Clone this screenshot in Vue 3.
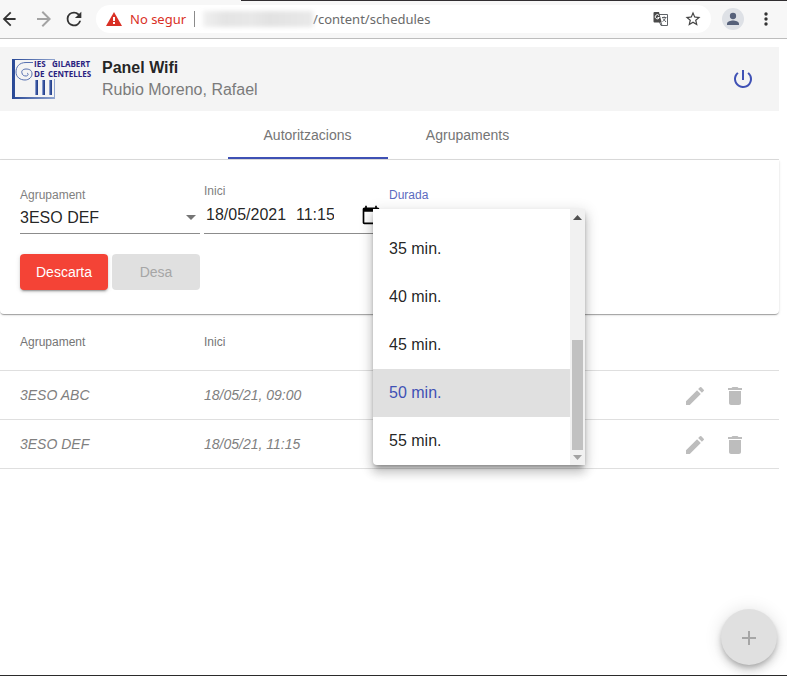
<script setup>
import { ref } from 'vue'

const group = ref('3ESO DEF')
const startDate = ref('18/05/2021')
const startTime = ref('11:15')
const duration = ref('50 min.')
const activeTab = ref('Autoritzacions')

const tabs = ['Autoritzacions', 'Agrupaments']
const groups = ['3ESO ABC', '3ESO DEF']
const durations = ['35 min.', '40 min.', '45 min.', '50 min.', '55 min.']
const schedules = [
  { group: '3ESO ABC', start: '18/05/21, 09:00' },
  { group: '3ESO DEF', start: '18/05/21, 11:15' },
]
</script>

<template>
  <div class="window">
    <div class="browser">
      <div class="window-edge"></div>
      <button class="nav" aria-label="Enrere">
        <svg width="24" height="24" viewBox="0 0 24 24"><path fill="#333" d="M19 11H6.830l5.590-5.590L11 4l-8 8 8 8 1.410-1.410L6.830 13H17v-2z" /></svg>
      </button>
      <button class="nav" aria-label="Endavant">
        <svg width="24" height="24" viewBox="0 0 24 24"><path fill="#a3a3a3" d="M5 11h12.170l-5.590-5.590L13 4l8 8-8 8-1.410-1.410L17.170 13H7v-2z" /></svg>
      </button>
      <button class="nav" aria-label="Actualitza">
        <svg width="22" height="22" viewBox="0 0 24 24"><path fill="#333" d="M17.650 6.350A7.960 7.960 0 0 0 12 4a8 8 0 1 0 7.730 10h-2.080A6 6 0 1 1 12 6c1.660 0 3.140.690 4.220 1.780L13 11h7V4l-2.350 2.350z" /></svg>
      </button>
      <div class="address">
        <svg class="warning" width="16" height="14" viewBox="0 0 16 14"><path fill="#d93025" d="M8 0 16 14H0z" /><path fill="#fff" d="M7 5h2v4H7zM7 10h2v2H7z" /></svg>
        <span class="unsafe">No segur</span>
        <span class="divider"></span>
        <span class="host"></span>
        <span class="path">/content/schedules</span>
        <button class="tool translate" aria-label="Tradueix">
          <svg width="16" height="16" viewBox="0 0 16 16">
            <path fill="none" stroke="#5f6368" d="M6 3.500h8.500v11H8L6.500 11" />
            <path fill="#4a4a4a" d="M1.500 1H6l2.700 10.500H1.500A1 1 0 0 1 .500 10.500V2a1 1 0 0 1 1-1z" />
            <path fill="none" stroke="#fff" d="M6 4.500A2.100 2.100 0 1 0 6.300 6.500H4.500" />
            <path fill="none" stroke="#5f6368" d="M9 6.500h4.500M11.200 5.500v1M12.500 6.500c-.5 2-1.500 3-3 4M10 7.500l3 3.500M8 11.500l1 3" />
          </svg>
        </button>
        <button class="tool" aria-label="Afegeix a les adreces d'interès">
          <svg width="18" height="18" viewBox="0 0 24 24"><path fill="#444" d="m22 9.240-7.190-.620L12 2 9.190 8.630 2 9.240l5.460 4.730L5.820 21 12 17.270 18.180 21l-1.630-7.030L22 9.240zM12 15.400l-3.760 2.270 1-4.280-3.320-2.880 4.380-.380L12 6.100l1.710 4.040 4.380.380-3.320 2.880 1 4.280L12 15.400z" /></svg>
        </button>
      </div>
      <button class="profile" aria-label="Perfil">
        <svg width="18" height="18" viewBox="0 0 24 24"><circle cx="12" cy="8" r="4.200" fill="#56617a" /><path fill="#56617a" d="M12 14c-3 0-8 1.500-8 4.400V20h16v-1.600C20 15.500 15 14 12 14z" /></svg>
      </button>
      <button class="more" aria-label="Menú">
        <svg width="4" height="14" viewBox="0 0 4 14"><g fill="#333"><circle cx="2" cy="2" r="1.700" /><circle cx="2" cy="7" r="1.700" /><circle cx="2" cy="12" r="1.700" /></g></svg>
      </button>
    </div>

    <main class="page">
      <header class="header">
        <svg class="logo" width="82" height="42" viewBox="0 0 82 42" role="img" aria-label="IES Gilabert de Centelles">
          <defs>
            <linearGradient id="frame" x1="0" x2="1"><stop offset="0" stop-color="#274795" /><stop offset="1" stop-color="#91a5cf" /></linearGradient>
            <linearGradient id="column" x1="0" x2="1"><stop offset="0" stop-color="#a9b8df" /><stop offset=".5" stop-color="#3a569f" /><stop offset="1" stop-color="#203b85" /></linearGradient>
          </defs>
          <path fill="url(#frame)" d="M0 1h43v1H3v37h40v2H0z" />
          <path fill="#91a5cf" d="M42 1h1v2h-1zM42 21h1v20h-1z" />
          <path fill="none" stroke="#5670b0" d="M21 4.500h-7C7 4.500 4 9 4 14c0 5 4 8 9 8 4 0 7-3 7-6 0-4-3-5-6-5-3 0-5 2-4 4 0 2 2 3 4 3 2 0 3-2 1-3" />
          <g fill="url(#column)"><rect x="23" y="22" width="3" height="15" /><rect x="30" y="22" width="3" height="15" /><rect x="37" y="22" width="3" height="15" /></g>
          <g class="logo-text"><text x="22" y="9">IES</text><text x="40" y="9">GILABERT</text><text x="22" y="19">DE</text><text x="36" y="19">CENTELLES</text></g>
        </svg>
        <div class="titles">
          <h1>Panel Wifi</h1>
          <p>Rubio Moreno, Rafael</p>
        </div>
        <button class="power" aria-label="Tanca la sessió">
          <svg width="24" height="24" viewBox="0 0 24 24"><path fill="#3f51b5" d="M13 3h-2v10h2V3zm4.830 2.170-1.420 1.420A6.920 6.920 0 0 1 19 12a7 7 0 1 1-11.420-5.420L6.170 5.170A8.930 8.930 0 0 0 3 12a9 9 0 1 0 14.830-6.830z" /></svg>
        </button>
      </header>

      <nav class="tabs" role="tablist">
        <button v-for="tab in tabs" :key="tab" class="tab" :class="{ active: tab === activeTab }" role="tab" :aria-selected="tab === activeTab" @click="activeTab = tab">{{ tab }}</button>
      </nav>

      <form class="card" @submit.prevent>
        <div class="fields">
          <div class="field">
            <label for="group">Agrupament</label>
            <select id="group" v-model="group">
              <option v-for="g in groups" :key="g">{{ g }}</option>
            </select>
          </div>
          <div class="field moment">
            <label for="date">Inici</label>
            <div class="inputs">
              <input id="date" v-model="startDate" class="date" type="text">
              <input v-model="startTime" class="time" type="text" aria-label="Hora d'inici">
              <button class="calendar" type="button" aria-label="Obre el calendari">
                <svg width="20" height="20" viewBox="0 0 24 24"><path d="M20 3h-1V1h-2v2H7V1H5v2H4c-1.100 0-2 .9-2 2v16c0 1.100.9 2 2 2h16c1.100 0 2-.9 2-2V5c0-1.100-.9-2-2-2zm0 18H4V8h16v13z" /></svg>
              </button>
            </div>
          </div>
          <div class="field duration">
            <label for="duration">Durada</label>
            <select id="duration" v-model="duration">
              <option v-for="d in durations" :key="d">{{ d }}</option>
            </select>
            <div class="panel">
              <div class="options" role="listbox" aria-label="Durada">
                <button v-for="d in durations" :key="d" type="button" class="option" :class="{ selected: d === duration }" role="option" :aria-selected="d === duration" @click="duration = d">{{ d }}</button>
              </div>
              <div class="scrollbar">
                <svg width="9" height="5" viewBox="0 0 9 5"><path fill="#505050" d="M4.500 0 9 5H0z" /></svg>
                <div class="thumb"></div>
                <svg width="9" height="5" viewBox="0 0 9 5"><path fill="#a3a3a3" d="M0 0h9L4.500 5z" /></svg>
              </div>
            </div>
          </div>
        </div>
        <div class="actions">
          <button class="discard" type="button">Descarta</button>
          <button class="save" type="submit" disabled>Desa</button>
        </div>
      </form>

      <table>
        <thead>
          <tr><th class="first">Agrupament</th><th class="second">Inici</th><th></th></tr>
        </thead>
        <tbody>
          <tr v-for="s in schedules" :key="s.start">
            <td>{{ s.group }}</td>
            <td>{{ s.start }}</td>
            <td>
              <div class="row-tools">
                <button disabled aria-label="Edita"><svg width="24" height="24" viewBox="0 0 24 24"><path d="M3 17.250V21h3.750L17.810 9.940l-3.750-3.750L3 17.250zM20.710 7.040a1 1 0 0 0 0-1.410l-2.340-2.340a1 1 0 0 0-1.410 0l-1.830 1.830 3.750 3.750 1.830-1.830z" /></svg></button>
                <button disabled aria-label="Esborra"><svg width="24" height="24" viewBox="0 0 24 24"><path d="M6 19c0 1.100.9 2 2 2h8c1.100 0 2-.9 2-2V7H6v12zM19 4h-3.500l-1-1h-5l-1 1H5v2h14V4z" /></svg></button>
              </div>
            </td>
          </tr>
        </tbody>
      </table>
    </main>

    <button class="fab" disabled aria-label="Afegeix">
      <svg width="24" height="24" viewBox="0 0 24 24"><path fill="#a6a6a6" d="M19 13h-6v6h-2v-6H5v-2h6V5h2v6h6v2z" /></svg>
    </button>
  </div>
</template>

<style>
body {
  background: #fff;
}
</style>

<style scoped>
* {
  box-sizing: border-box;
}

.window {
  display: flex;
  flex-direction: column;
  min-height: 100vh;
  border-bottom: 1px solid #2b2b2b;
  font-family: "Liberation Sans", Arial, sans-serif;
  color: rgba(0, 0, 0, 0.87);
}

button,
input,
select {
  margin: 0;
  padding: 0;
  border: 0;
  background: none;
  font: inherit;
  color: inherit;
}

svg {
  display: block;
}

/* Browser bar */
.browser {
  position: relative;
  display: flex;
  align-items: center;
  height: 39px;
  padding-right: 20px;
  background: #f7f7f7;
  border-bottom: 1px solid #bdbdbd;
}

.window-edge {
  position: absolute;
  top: 0;
  right: 0;
  left: 241px;
  height: 1px;
  background: #302d30;
}

.nav {
  display: flex;
  justify-content: center;
  width: 32px;
}

.nav:first-of-type {
  width: 22px;
  justify-content: flex-end;
}

.nav:nth-of-type(2) {
  width: 40px;
}

.nav:nth-of-type(3) {
  width: 24px;
}

.address {
  display: flex;
  flex: 1;
  align-items: center;
  height: 28px;
  margin-left: 10px;
  padding: 0 9px 0 10px;
  border-radius: 14px;
  background: #fff;
  font: 13px "Noto Sans", sans-serif;
  white-space: nowrap;
}

.unsafe {
  margin-left: 8px;
  color: #d93025;
}

.divider {
  width: 1px;
  height: 16px;
  margin: 0 8px;
  background: #8b8b8b;
}

.host {
  width: 110px;
  height: 16px;
  background: linear-gradient(90deg, #f0f0f0, #e4e4e4 20%, #e8e8e8 45%, #e2e2e2 60%, #e9e9e9);
  filter: blur(2px);
}

.path {
  flex: 1;
  color: #6a6a6a;
}

.translate {
  margin-right: 15px;
}

.profile {
  display: flex;
  align-items: center;
  justify-content: center;
  width: 22px;
  height: 22px;
  margin: 0 20px 0 11px;
  border-radius: 50%;
  background: #dee1e6;
}

.browser {
  padding-right: 19px;
}

/* Page */
.page {
  padding: 8px 8px 0 0;
}

.header {
  display: flex;
  align-items: center;
  height: 64px;
  padding: 0 24px 0 12px;
  background: #f4f4f4;
}

.logo-text {
  font: 700 8px "Open Sans", sans-serif;
  fill: #2b2380;
}

.titles {
  flex: 1;
  margin-left: 8px;
  font-size: 16px;
  line-height: 22px;
}

h1,
p {
  margin: 0;
  font-size: inherit;
}

.titles p {
  color: #7b7b7b;
}

.tabs {
  display: flex;
  justify-content: center;
  height: 49px;
  padding-right: 4px;
  border-bottom: 1px solid #dcdcdc;
}

.tab {
  width: 160px;
  padding-top: 2px;
  border-bottom: 2px solid transparent;
  font-size: 14px;
  color: #757575;
}

.tab.active {
  border-color: #3f51b5;
}

.card {
  position: relative;
  z-index: 1;
  padding: 24px 20px;
  border-radius: 0 0 4px 4px;
  background: #fff;
  box-shadow: 0 2px 1px -1px rgba(0, 0, 0, 0.2), 0 1px 1px rgba(0, 0, 0, 0.14), 0 1px 3px rgba(0, 0, 0, 0.12);
}

.fields {
  display: flex;
  gap: 4px;
}

.field {
  width: 180px;
  height: 50px;
  padding-top: 4px;
  border-bottom: 1px solid #8c8c8c;
}

.field label {
  display: block;
  font-size: 12px;
  line-height: 14px;
  color: #808080;
}

.field select {
  display: block;
  width: 100%;
  height: 30px;
  appearance: none;
  font-size: 16px;
}

.field:first-child {
  position: relative;
}

.field:first-child::after {
  content: "";
  position: absolute;
  right: 4px;
  bottom: 13px;
  border: 5px solid transparent;
  border-top-color: #757575;
  border-bottom: 0;
  pointer-events: none;
}

.moment {
  padding-top: 0;
}

.inputs {
  display: flex;
  align-items: center;
  height: 33px;
  padding-left: 2px;
}

.inputs input {
  height: 24px;
  font-size: 16px;
}

.date {
  width: 90px;
}

.time {
  width: 38px;
}

.calendar {
  margin-left: 27px;
}

.duration {
  position: relative;
}

.duration label {
  padding-left: 1px;
  color: #5c6bc0;
}

.panel {
  position: absolute;
  top: 25px;
  left: -15px;
  display: flex;
  width: 212px;
  height: 256px;
  border-radius: 0 0 4px 4px;
  background: #fff;
  box-shadow: 0 5px 5px -3px rgba(0, 0, 0, 0.2), 0 8px 10px 1px rgba(0, 0, 0, 0.14), 0 3px 14px 2px rgba(0, 0, 0, 0.12), 0 2px 4px -1px rgba(0, 0, 0, 0.2);
}

.options {
  display: flex;
  flex: 1;
  flex-direction: column;
  justify-content: flex-end;
}

.option {
  height: 48px;
  padding: 0 16px;
  font-size: 16px;
  text-align: left;
}

.option.selected {
  background: #e0e0e0;
  color: #3f51b5;
}

.scrollbar {
  display: flex;
  flex-direction: column;
  align-items: center;
  width: 15px;
  padding: 6px 0 5px;
  background: #f1f1f1;
}

.thumb {
  width: 11px;
  height: 110px;
  margin: auto 0 5px;
  background: #c1c1c1;
}

.actions {
  display: flex;
  gap: 4px;
  margin-top: 20px;
}

.actions button {
  width: 88px;
  height: 36px;
  border-radius: 4px;
  font-size: 14px;
}

.discard {
  background: #f44336;
  box-shadow: 0 3px 1px -2px rgba(0, 0, 0, 0.2), 0 2px 2px rgba(0, 0, 0, 0.14), 0 1px 5px rgba(0, 0, 0, 0.12);
  color: #fff;
}

.save {
  background: #e0e0e0;
  color: #a6a6a6;
}

/* Schedule list */
table {
  width: 100%;
  table-layout: fixed;
  border-spacing: 0;
}

th,
td {
  height: 49px;
  padding: 0;
  border-bottom: 1px solid #dfdfdf;
  text-align: left;
  font-size: 14px;
}

th {
  height: 57px;
  font-size: 12px;
  font-weight: 400;
  color: #757575;
}

td {
  font-style: italic;
  color: #808080;
}

th:first-child,
td:first-child {
  padding-left: 20px;
}

.first {
  width: 204px;
}

.second {
  width: 184px;
}

.row-tools {
  display: flex;
  justify-content: flex-end;
  gap: 16px;
  padding: 2px 32px 0 0;
}

.row-tools svg {
  fill: #bdbdbd;
}

.fab {
  position: fixed;
  right: 10px;
  bottom: 11px;
  display: flex;
  align-items: center;
  justify-content: center;
  width: 56px;
  height: 56px;
  padding-top: 2px;
  border-radius: 50%;
  background: #e0e0e0;
  box-shadow: 0 3px 5px -1px rgba(0, 0, 0, 0.2), 0 6px 10px rgba(0, 0, 0, 0.14), 0 1px 18px rgba(0, 0, 0, 0.12);
}
</style>
